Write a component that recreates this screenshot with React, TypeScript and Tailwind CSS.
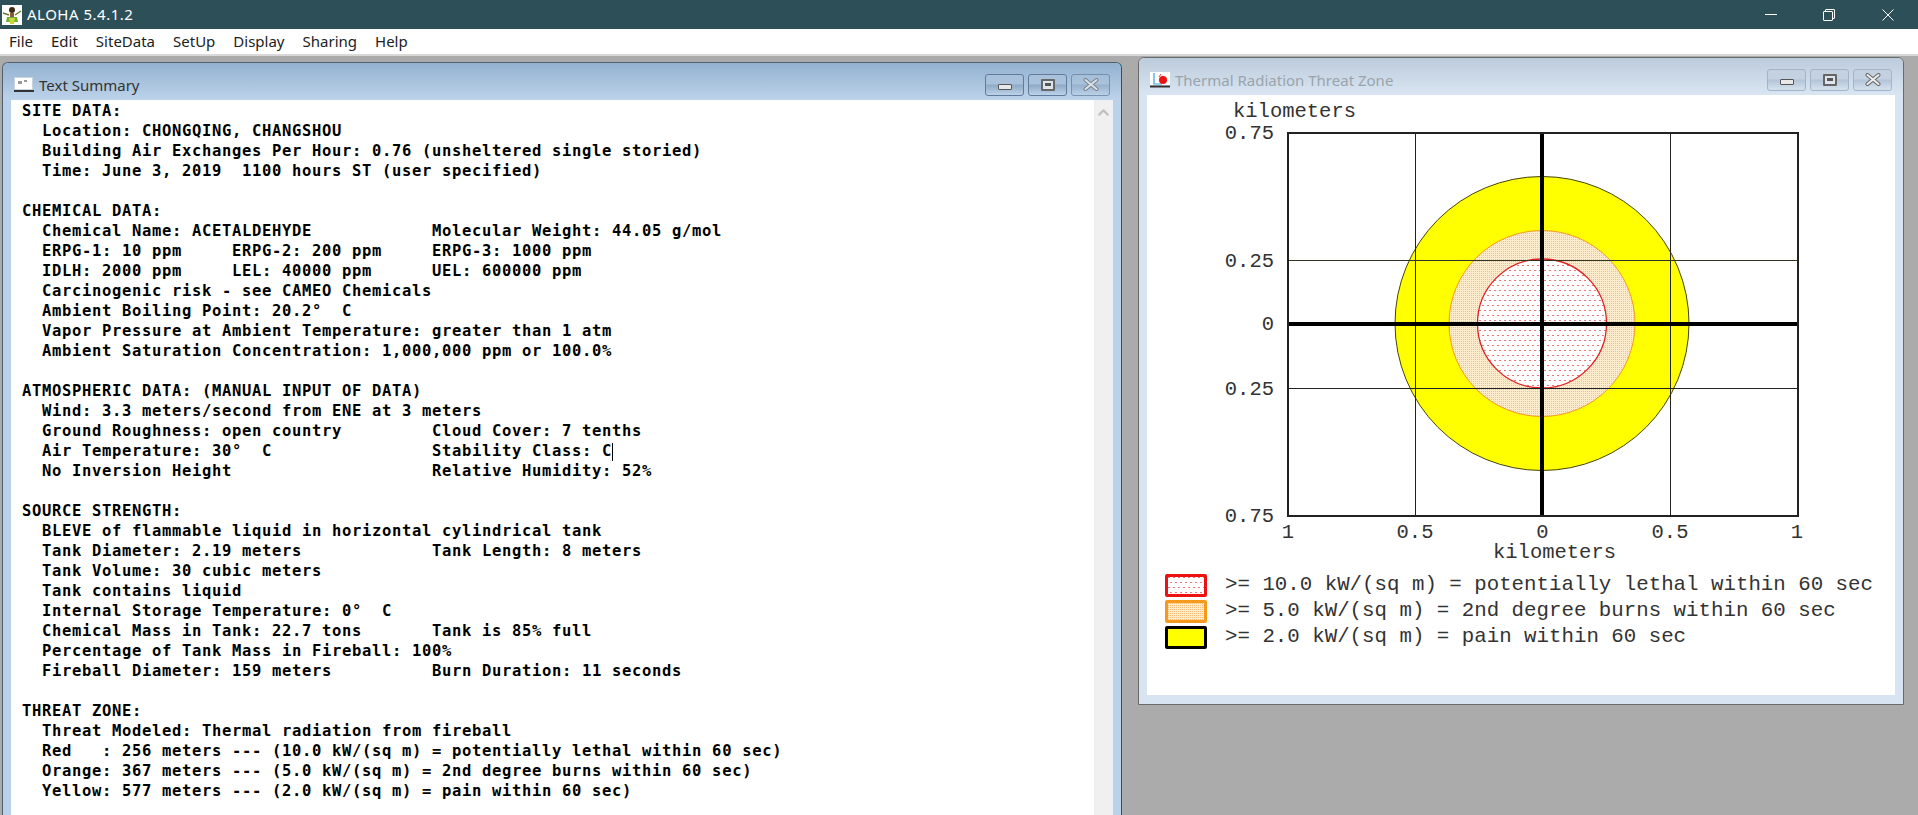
import React from "react";
import { ChevronUp } from "lucide-react";

const summary = [
  "SITE DATA:",
  "  Location: CHONGQING, CHANGSHOU",
  "  Building Air Exchanges Per Hour: 0.76 (unsheltered single storied)",
  "  Time: June 3, 2019  1100 hours ST (user specified)",
  "",
  "CHEMICAL DATA:",
  "  Chemical Name: ACETALDEHYDE            Molecular Weight: 44.05 g/mol",
  "  ERPG-1: 10 ppm     ERPG-2: 200 ppm     ERPG-3: 1000 ppm",
  "  IDLH: 2000 ppm     LEL: 40000 ppm      UEL: 600000 ppm",
  "  Carcinogenic risk - see CAMEO Chemicals",
  "  Ambient Boiling Point: 20.2°  C",
  "  Vapor Pressure at Ambient Temperature: greater than 1 atm",
  "  Ambient Saturation Concentration: 1,000,000 ppm or 100.0%",
  "",
  "ATMOSPHERIC DATA: (MANUAL INPUT OF DATA)",
  "  Wind: 3.3 meters/second from ENE at 3 meters",
  "  Ground Roughness: open country         Cloud Cover: 7 tenths",
  "  Air Temperature: 30°  C                Stability Class: C",
  "  No Inversion Height                    Relative Humidity: 52%",
  "",
  "SOURCE STRENGTH:",
  "  BLEVE of flammable liquid in horizontal cylindrical tank",
  "  Tank Diameter: 2.19 meters             Tank Length: 8 meters",
  "  Tank Volume: 30 cubic meters",
  "  Tank contains liquid",
  "  Internal Storage Temperature: 0°  C",
  "  Chemical Mass in Tank: 22.7 tons       Tank is 85% full",
  "  Percentage of Tank Mass in Fireball: 100%",
  "  Fireball Diameter: 159 meters          Burn Duration: 11 seconds",
  "",
  "THREAT ZONE:",
  "  Threat Modeled: Thermal radiation from fireball",
  "  Red   : 256 meters --- (10.0 kW/(sq m) = potentially lethal within 60 sec)",
  "  Orange: 367 meters --- (5.0 kW/(sq m) = 2nd degree burns within 60 sec)",
  "  Yellow: 577 meters --- (2.0 kW/(sq m) = pain within 60 sec)",
];

const menus = ["File", "Edit", "SiteData", "SetUp", "Display", "Sharing", "Help"];

const legend = [
  { fill: "url(#redDots)", border: "border-[#ee1111]", label: ">= 10.0 kW/(sq m) = potentially lethal within 60 sec" },
  { fill: "url(#orangeDots)", border: "border-[#f59a1c]", label: ">= 5.0 kW/(sq m) = 2nd degree burns within 60 sec" },
  { fill: "#ffff00", border: "border-black", label: ">= 2.0 kW/(sq m) = pain within 60 sec" },
];

function HulaIcon() {
  return (
    <svg width="20" height="20" viewBox="0 0 20 20" className="bg-white shrink-0">
      <path d="M1 8 L7 10 M19 6 L13 10" stroke="#6b7a2c" strokeWidth="1.5" />
      <circle cx="10" cy="5" r="3" fill="#3a2a18" />
      <rect x="8" y="8" width="4" height="4" fill="#8a5a34" />
      <path d="M5 12 H15 L16 17 H4 Z" fill="#6fae2e" />
      <path d="M7 13 H13 L12 19 H8 Z" fill="#c8d63a" />
    </svg>
  );
}

function TextDocIcon() {
  return (
    <svg width="20" height="16" viewBox="0 0 20 16" className="shrink-0">
      <rect x="0.5" y="0.5" width="18" height="12" fill="#ffffff" stroke="#c7d3df" />
      <path d="M5 4 V7 M7 4 V7 M10 4 H13" stroke="#333" strokeWidth="1" />
      <rect x="0" y="13" width="20" height="2" fill="#333" />
    </svg>
  );
}

function ThreatIcon() {
  return (
    <svg width="20" height="16" viewBox="0 0 20 16" className="shrink-0">
      <rect x="0" y="0" width="20" height="13" fill="#ffffff" />
      <path d="M4 1 V12 H12" stroke="#3aa0e0" strokeWidth="1.2" fill="none" />
      <path d="M11 2 L9 5" stroke="#e03a3a" strokeWidth="1" />
      <circle cx="13" cy="8" r="4" fill="#ee1111" />
      <rect x="0" y="13.5" width="20" height="2" fill="#333" />
    </svg>
  );
}

function CaptionButtons({ active }: { active: boolean }) {
  const face = active
    ? "border-[#5f7c9c] bg-[linear-gradient(#a9c1da_0%,#a9c1da_45%,#8ea9c6_50%,#bcd2e8_100%)]"
    : "border-[#a3b4c8] bg-[linear-gradient(#c3d1e0_0%,#c3d1e0_45%,#b3c4d7_50%,#d6e2ef_100%)]";
  const cls = `w-[39px] h-[22px] rounded-[3px] border flex items-center justify-center ${face}`;
  return (
    <div className="flex gap-[4px]">
      <div className={cls}>
        <div className="w-[14px] h-[6px] mt-[4px] rounded-[1px] border border-[#555] bg-[#e8e8e8]" />
      </div>
      <div className={cls}>
        <div className="w-[14px] h-[12px] rounded-[1px] border-2 border-[#666] bg-[#dfe5ec] flex items-center justify-center">
          <div className="w-[6px] h-[3px] bg-[#555]" />
        </div>
      </div>
      <div className={cls + (active ? " opacity-70" : "")}>
        <svg width="16" height="13" viewBox="0 0 16 13">
          <path d="M2.5 2 L13.5 11 M13.5 2 L2.5 11" stroke="#666" strokeWidth="4" strokeLinecap="round" />
          <path d="M2.5 2 L13.5 11 M13.5 2 L2.5 11" stroke="#eeeeee" strokeWidth="2" strokeLinecap="round" />
        </svg>
      </div>
    </div>
  );
}

function Chart() {
  const label = "fill-[#333333] text-[20.5px] font-['Liberation_Mono',monospace]";
  return (
    <svg viewBox="0 0 748 470" className="block w-[748px] h-[470px]" shapeRendering="crispEdges">
      <defs>
        <pattern id="redDots" width="5" height="10" patternUnits="userSpaceOnUse">
          <rect width="5" height="10" fill="#ffffff" />
          <rect x="0" y="0" width="2" height="1" fill="#ee7777" />
          <rect x="2" y="5" width="2" height="1" fill="#ee7777" />
        </pattern>
        <pattern id="orangeDots" width="2" height="2" patternUnits="userSpaceOnUse">
          <rect width="2" height="2" fill="#feeccc" />
          <rect x="0" y="0" width="1" height="1" fill="#f6c07a" />
        </pattern>
      </defs>
      <rect x="141" y="38" width="510" height="383" fill="#ffffff" />
      <circle cx="395" cy="228.5" r="147" fill="#ffff00" stroke="#44440a" shapeRendering="auto" />
      <circle cx="395" cy="228.5" r="93" fill="url(#orangeDots)" stroke="#f59a1c" shapeRendering="auto" />
      <circle cx="395" cy="228.5" r="64.5" fill="url(#redDots)" stroke="#e02020" strokeWidth="1.3" shapeRendering="auto" />
      {/* grid goes over the zones */}
      <path d="M268.5 38 V421 M523.5 38 V421" stroke="#222222" strokeWidth="1" />
      <rect x="141" y="165" width="510" height="1" fill="#333322" />
      <rect x="141" y="293" width="510" height="1" fill="#222222" />
      <rect x="141" y="227" width="510" height="4" fill="#000000" />
      <rect x="393" y="38" width="4" height="383" fill="#000000" />
      <rect x="141" y="38" width="510" height="383" fill="none" stroke="#222222" strokeWidth="1.5" />

      <g className={label} shapeRendering="auto">
        <text x="86" y="22">kilometers</text>
        <text x="127" y="44" textAnchor="end">0.75</text>
        <text x="127" y="172" textAnchor="end">0.25</text>
        <text x="127" y="235" textAnchor="end">0</text>
        <text x="127" y="300" textAnchor="end">0.25</text>
        <text x="127" y="427" textAnchor="end">0.75</text>
        <text x="141" y="443" textAnchor="middle">1</text>
        <text x="268" y="443" textAnchor="middle">0.5</text>
        <text x="395.5" y="443" textAnchor="middle">0</text>
        <text x="523" y="443" textAnchor="middle">0.5</text>
        <text x="650" y="443" textAnchor="middle">1</text>
        <text x="346" y="463">kilometers</text>
      </g>
    </svg>
  );
}

export default function App() {
  return (
    <div className="w-[1918px] h-[815px] flex flex-col overflow-hidden bg-[#ababab] font-['Noto_Sans',sans-serif]">
      {/* App title bar */}
      <div className="h-[29px] shrink-0 bg-[#2d4f57] flex items-center pl-[2px] text-white text-[15px] tracking-[0.5px]">
        <HulaIcon />
        <span className="ml-[5px]">ALOHA 5.4.1.2</span>
        <div className="ml-auto flex items-center h-full">
          <div className="w-[12px] h-px bg-white mr-[46px]" />
          <div className="relative w-[12px] h-[12px] mr-[47px]">
            <div className="absolute left-[2px] top-0 w-[10px] h-[10px] border border-white rounded-[1px]" />
            <div className="absolute left-0 top-[2px] w-[10px] h-[10px] border border-white bg-[#2d4f57] rounded-[1px]" />
          </div>
          <svg width="12" height="12" viewBox="0 0 12 12" className="mr-[24px]">
            <path d="M0.5 0.5 L11.5 11.5 M11.5 0.5 L0.5 11.5" stroke="#ffffff" strokeWidth="1" />
          </svg>
        </div>
      </div>

      {/* Menu bar */}
      <div className="h-[25px] shrink-0 bg-white flex items-center pl-[9px] gap-[18px] text-[15px] text-[#222222]">
        {menus.map((m) => (
          <span key={m}>{m}</span>
        ))}
      </div>

      {/* MDI workspace */}
      <div className="flex-1 min-h-0 flex items-start overflow-hidden border-t-2 border-[#d8d8d8]">
        {/* Text Summary window */}
        <div className="ml-[2px] mt-[6px] w-[1120px] h-[770px] shrink-0 flex flex-col rounded-t-[6px] border border-b-0 border-[#4f5f6c] border-r-[#0d5f73] bg-[#b9d1ea]">
          <div className="h-[37px] shrink-0 flex items-center pl-[11px] pr-[11px] pt-[6px] rounded-t-[6px] bg-[linear-gradient(#93b1d0,#bcd3ea)]">
            <TextDocIcon />
            <span className="ml-[5px] mt-[2px] text-[15px] text-[#333333]">Text Summary</span>
            <div className="ml-auto">
              <CaptionButtons active />
            </div>
          </div>
          <div className="flex-1 min-h-0 mx-[8px] flex bg-white">
            <div className="flex-1 pl-[11px] pt-px font-['DejaVu_Sans_Mono',monospace] font-bold text-[15.5px] leading-[20px] tracking-[0.67px] text-black whitespace-pre">
              {summary.map((line, i) => (
                <div key={i} className="h-[20px]">
                  {line}
                  {line.endsWith("Stability Class: C") && (
                    <span className="inline-block w-0 h-[18px] align-middle border-l border-black" />
                  )}
                </div>
              ))}
            </div>
            <div className="w-[19px] shrink-0 bg-[#f0f0f0] flex justify-center pt-[4px]">
              <ChevronUp size={17} strokeWidth={3} className="text-[#c0c0c0]" />
            </div>
          </div>
        </div>

        {/* Threat zone window */}
        <div className="ml-[16px] mt-[1px] w-[766px] h-[648px] shrink-0 flex flex-col rounded-t-[6px] border border-[#6a6a6a] bg-[#d8e4f1]">
          <div className="h-[37px] shrink-0 flex items-center pl-[11px] pr-[11px] pt-[6px] rounded-t-[6px] bg-[linear-gradient(#bccbdb,#d9e5f2)]">
            <ThreatIcon />
            <span className="ml-[5px] mt-[2px] text-[15px] text-[#9aa4ad]">Thermal Radiation Threat Zone</span>
            <div className="ml-auto">
              <CaptionButtons active={false} />
            </div>
          </div>
          <div className="w-[748px] h-[600px] mx-[8px] bg-white flex flex-col">
            <Chart />
            <div className="mt-[9px] ml-[18px] flex flex-col gap-[3px]">
              {legend.map((row) => (
                <div key={row.label} className="h-[23px] flex items-center gap-[18px]">
                  <div className={`w-[42px] h-[23px] border-[3px] rounded-[2px] ${row.border}`}>
                    <svg className="block w-full h-full">
                      <rect width="100%" height="100%" fill={row.fill} />
                    </svg>
                  </div>
                  <span className="pb-[2px] font-['Liberation_Mono',monospace] text-[20.77px] text-[#333333] whitespace-pre">
                    {row.label}
                  </span>
                </div>
              ))}
            </div>
          </div>
        </div>
      </div>
    </div>
  );
}
